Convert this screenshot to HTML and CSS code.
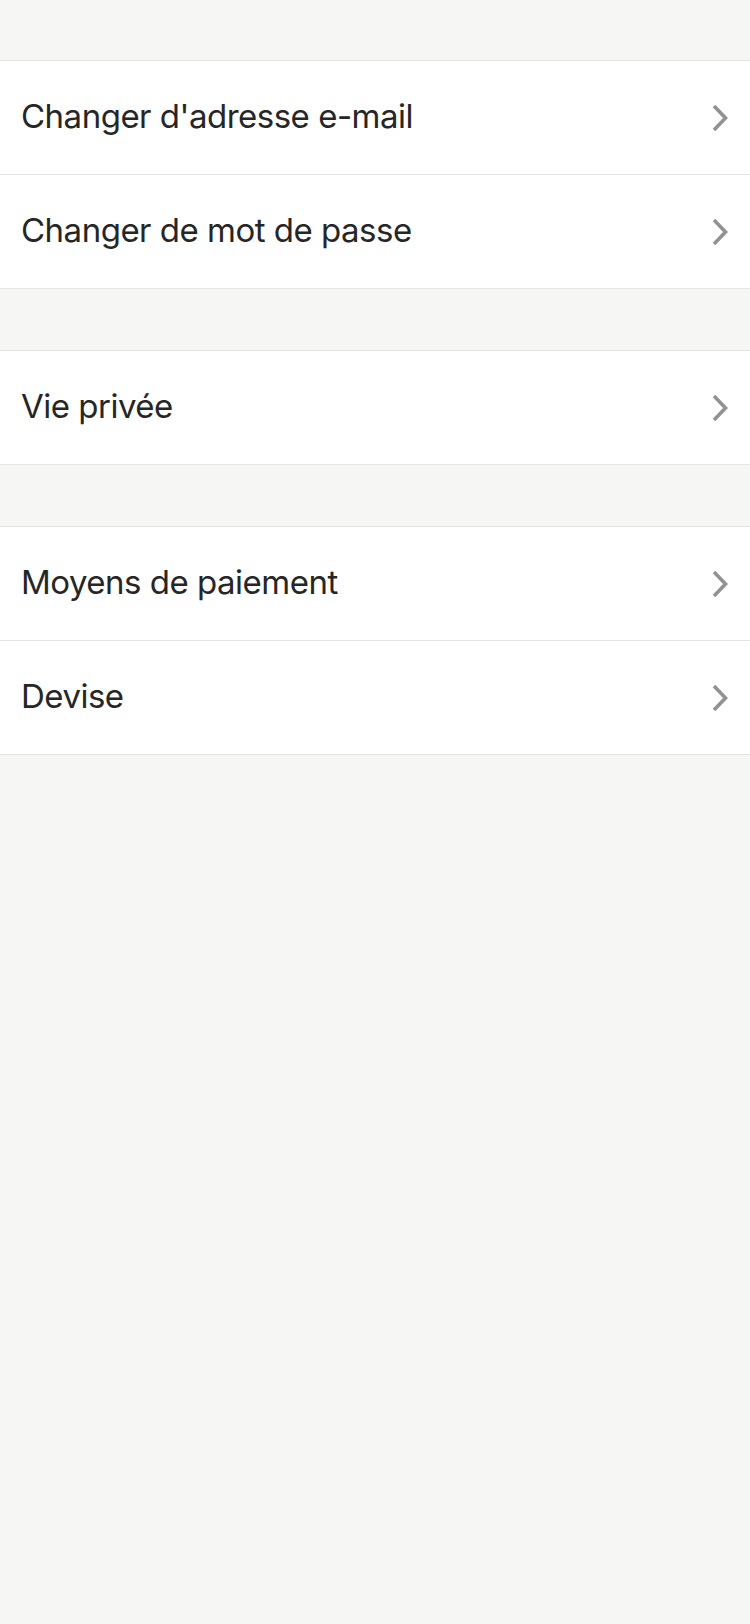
FILE: index.html
```html
<!DOCTYPE html>
<html lang="fr">
<head>
<meta charset="utf-8">
<title>Paramètres</title>
<link rel="stylesheet" href="styles.css">
</head>
<body>
<main class="settings">
  <section class="group group-first">
    <a class="row" href="#"><span class="label">Changer d'adresse e-mail</span><svg class="chev" viewBox="0 0 16 28" width="16" height="28"><polyline points="2,2 13.5,14 2,26"/></svg></a>
    <a class="row" href="#"><span class="label">Changer de mot de passe</span><svg class="chev" viewBox="0 0 16 28" width="16" height="28"><polyline points="2,2 13.5,14 2,26"/></svg></a>
  </section>
  <section class="group">
    <a class="row" href="#"><span class="label">Vie privée</span><svg class="chev" viewBox="0 0 16 28" width="16" height="28"><polyline points="2,2 13.5,14 2,26"/></svg></a>
  </section>
  <section class="group">
    <a class="row" href="#"><span class="label">Moyens de paiement</span><svg class="chev" viewBox="0 0 16 28" width="16" height="28"><polyline points="2,2 13.5,14 2,26"/></svg></a>
    <a class="row" href="#"><span class="label">Devise</span><svg class="chev" viewBox="0 0 16 28" width="16" height="28"><polyline points="2,2 13.5,14 2,26"/></svg></a>
  </section>
</main>
</body>
</html>
```
FILE: styles.css
```css
html, body {
  margin: 0;
  padding: 0;
  background: #f6f6f4;
  min-height: 100%;
}
body {
  font-family: Inter, "Noto Sans", "Liberation Sans", sans-serif;
  color: #262626;
}
.settings {
  display: flex;
  flex-direction: column;
}
.group {
  margin-top: 61px;
  background: #ffffff;
  border-top: 1px solid #e4e4e2;
  display: flex;
  flex-direction: column;
}
.group-first {
  margin-top: 60px;
}
.row {
  height: 113px;
  border-bottom: 1px solid #e4e4e2;
  display: flex;
  align-items: center;
  justify-content: space-between;
  padding: 0 22px 0 21px;
  text-decoration: none;
  color: inherit;
}
.label {
  font-size: 33px;
  letter-spacing: -0.5px;
  line-height: 40px;
  margin-top: -3px;
}
.chev {
  fill: none;
  stroke: #929292;
  stroke-width: 3.6;
  stroke-linecap: butt;
  stroke-linejoin: miter;
}
```
